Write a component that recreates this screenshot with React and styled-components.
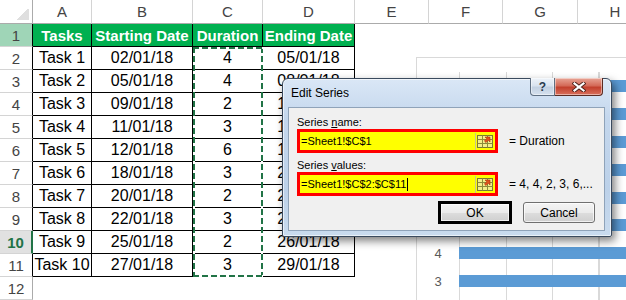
import React from 'react';
import styled, { createGlobalStyle } from 'styled-components';

const GlobalStyle = createGlobalStyle`
  html, body { margin: 0; padding: 0; background: #fff; overflow: hidden; }
  * { box-sizing: border-box; }
`;

const Page = styled.div`
  position: relative;
  width: 626px;
  height: 300px;
  overflow: hidden;
  font-family: "Liberation Sans", Arial, sans-serif;
`;

const Sheet = styled.div`
  display: grid;
  grid-template-columns: 33px 59px 101px 70px 92px 74px 74px 75px 75px;
  grid-template-rows: 24px repeat(12, 23px);
`;

const ColHead = styled.div`
  grid-row: 1;
  grid-column: ${p => p.$c};
  display: flex;
  align-items: center;
  justify-content: center;
  border-right: 1px solid #d4d4d4;
  border-bottom: 1px solid #ababab;
  color: #444;
  font-size: 15px;
`;

const Corner = styled(ColHead)`
  border-right-color: #ababab;
  background: linear-gradient(135deg, transparent 50%, #dfdfdf 50%) right 3px bottom 3px / 15px 11px no-repeat;
`;

const RowHead = styled.div`
  grid-row: ${p => p.$r};
  grid-column: 1;
  display: flex;
  align-items: center;
  justify-content: center;
  font-size: 15px;
  color: ${p => (p.$active ? '#217346' : '#444')};
  font-weight: ${p => (p.$active ? 700 : 400)};
  background: ${p => (p.$active ? '#e1e1e1' : p.$hl ? '#9fd5b7' : '#fff')};
  border-bottom: 1px solid #d4d4d4;
  border-right: ${p => (p.$active ? '2px solid #217346' : p.$table ? '1px solid #000' : '1px solid #ababab')};
`;

const Cell = styled.div`
  grid-row: ${p => p.$r};
  grid-column: ${p => p.$c};
  display: flex;
  align-items: center;
  justify-content: center;
  white-space: nowrap;
  border-right: 1px solid #000;
  border-bottom: 1px solid #000;
  background: ${p => (p.$head ? '#00b050' : '#fff')};
  color: ${p => (p.$head ? '#fff' : '#000')};
  font-weight: ${p => (p.$head ? 700 : 400)};
  font-size: ${p => (p.$head ? '15px' : '16px')};
`;

const dash = (deg) => `repeating-linear-gradient(${deg}, #217346 0 6px, #fff 6px 9px)`;

const Marquee = styled.div`
  grid-row: 3 / 13;
  grid-column: 4;
  z-index: 1;
  pointer-events: none;
  background:
    ${dash('90deg')} top left / 100% 2px no-repeat,
    ${dash('90deg')} bottom left / 100% 2px no-repeat,
    ${dash('180deg')} top left / 2px 100% no-repeat,
    ${dash('180deg')} top right / 2px 100% no-repeat;
`;

const Chart = styled.div`
  position: absolute;
  left: 416px;
  top: 57px;
  width: 260px;
  height: 280px;
  background: #fff;
  border: 1px solid #d9d9d9;
  padding-top: 14px;
  display: grid;
  grid-template-columns: 42px 1fr;
  grid-template-rows: 1fr;
`;

const Labels = styled.div`
  display: flex;
  flex-direction: column;
`;

const Label = styled.div`
  height: 27.9px;
  display: flex;
  align-items: center;
  justify-content: center;
  color: #595959;
  font-size: 13px;
`;

const PlotArea = styled.div`
  display: flex;
  flex-direction: column;
  background: repeating-linear-gradient(90deg, #d9d9d9 0 1px, transparent 1px 46.5px);
`;

const BarRow = styled.div`
  height: 27.9px;
  display: flex;
  align-items: center;
`;

const Bar = styled.div`
  height: 12px;
  width: 100%;
  background: #5b9bd5;
`;

const Dialog = styled.div`
  position: absolute;
  left: 282px;
  top: 78px;
  width: 330px;
  height: 159px;
  display: flex;
  flex-direction: column;
  padding: 0 6px 5px 5px;
  border: 1px solid #3a4a5e;
  border-radius: 6px 6px 2px 2px;
  background: linear-gradient(#dae7f6, #c4d7ed 25%, #bcd1e9 70%, #c9dbee);
  box-shadow: 3px 4px 9px rgba(0, 0, 0, 0.5), inset 0 0 0 1px rgba(255, 255, 255, 0.6);
  font-family: "Liberation Sans", Arial, sans-serif;
  color: #000;
`;

const TitleBar = styled.div`
  height: 28px;
  display: flex;
  justify-content: space-between;
  align-items: flex-start;
`;

const Title = styled.div`
  line-height: 29px;
  padding-left: 3px;
  font-size: 12px;
`;

const CaptionButtons = styled.div`
  display: flex;
  margin-right: 2px;
  margin-top: -1px;
`;

const CaptionButton = styled.div`
  height: 18px;
  width: ${p => (p.$close ? '48px' : '25px')};
  display: flex;
  align-items: center;
  justify-content: center;
  border: 1px solid ${p => (p.$close ? '#5b2b22' : '#5f6f82')};
  border-top: none;
  border-left-width: ${p => (p.$close ? '0' : '1px')};
  border-radius: ${p => (p.$close ? '0 0 4px 0' : '0 0 0 4px')};
  background: ${p =>
    p.$close
      ? 'linear-gradient(#e8a596, #d46a58 45%, #c2402d 55%, #d9705c)'
      : 'linear-gradient(#eef3f9, #d9e3ef 45%, #c3d1e2 55%, #d6e1ee)'};
  box-shadow: inset 0 0 0 1px rgba(255, 255, 255, 0.45);
  color: #2a3a4e;
  font-weight: 700;
  font-size: 12px;
`;

const Panel = styled.div`
  flex: 1;
  background: #f0f0f0;
  border: 1px solid #8fa3b9;
  padding: 7px 8px 0 8px;
  display: flex;
  flex-direction: column;
`;

const FieldLabel = styled.div`
  font-size: 11px;
  line-height: 14px;
  margin-top: ${p => p.$gap || 0}px;
`;

const FieldRow = styled.div`
  display: flex;
  align-items: center;
`;

const InputBox = styled.div`
  width: 201px;
  height: ${p => p.$h}px;
  border: 3px solid #ff0000;
  background: #ffff00;
  display: flex;
  align-items: center;
  padding-left: 1px;
  padding-right: 1px;
  font-size: 11px;
`;

const InputText = styled.span`
  flex: 1;
  white-space: nowrap;
  display: flex;
  align-items: center;
`;

const Caret = styled.span`
  display: inline-block;
  width: 1px;
  height: 13px;
  margin-left: 1px;
  background: #000;
`;

const RangeButton = styled.div`
  width: 19px;
  height: 17px;
  display: flex;
  align-items: center;
  justify-content: center;
  border-left: 1px solid #c8c88a;
`;

const Value = styled.div`
  margin-left: 11px;
  font-size: 12px;
  white-space: nowrap;
`;

const ButtonRow = styled.div`
  display: flex;
  justify-content: flex-end;
  align-items: center;
  margin-top: 5px;
  padding-right: 1px;
  gap: 11px;
`;

const Button = styled.div`
  width: ${p => (p.$default ? '74px' : '72px')};
  height: ${p => (p.$default ? '23px' : '21px')};
  display: flex;
  align-items: center;
  justify-content: center;
  font-size: 12px;
  border: ${p => (p.$default ? '3px solid #000' : '1px solid #707070')};
  border-radius: ${p => (p.$default ? '0' : '3px')};
  background: linear-gradient(#f4f4f4, #ebebeb 50%, #dddddd 51%, #cfcfcf);
  box-shadow: inset 0 0 0 1px rgba(255, 255, 255, 0.7);
`;

function RangeIcon() {
  return (
    <svg width="16" height="14" viewBox="0 0 16 14">
      <rect x="0.5" y="1.5" width="15" height="12" fill="#f3ee8a" stroke="#7a7a30" />
      <path d="M0.5 5.5H15.5M0.5 9.5H15.5M5.5 1.5V13.5M10.5 1.5V13.5" stroke="#8c8c3a" strokeWidth="1" />
      <path d="M8 3L13 3L13 8L11.3 6.3L9 8.6L7.4 7L9.7 4.7Z" fill="#e2531c" stroke="#a33410" strokeWidth="0.6" />
    </svg>
  );
}

function CloseGlyph() {
  return (
    <svg width="14" height="10" viewBox="0 0 14 10">
      <path d="M2.5 1.5L11.5 8.5M11.5 1.5L2.5 8.5" stroke="#4a2019" strokeWidth="4" strokeLinecap="square" />
      <path d="M2.5 1.5L11.5 8.5M11.5 1.5L2.5 8.5" stroke="#fff" strokeWidth="2.2" strokeLinecap="square" />
    </svg>
  );
}

const columns = ['A', 'B', 'C', 'D', 'E', 'F', 'G', 'H'];
const headers = ['Tasks', 'Starting Date', 'Duration', 'Ending Date'];
const tasks = [
  ['Task 1', '02/01/18', 4, '05/01/18'],
  ['Task 2', '05/01/18', 4, '08/01/18'],
  ['Task 3', '09/01/18', 2, '10/01/18'],
  ['Task 4', '11/01/18', 3, '13/01/18'],
  ['Task 5', '12/01/18', 6, '17/01/18'],
  ['Task 6', '18/01/18', 3, '20/01/18'],
  ['Task 7', '20/01/18', 2, '21/01/18'],
  ['Task 8', '22/01/18', 3, '24/01/18'],
  ['Task 9', '25/01/18', 2, '26/01/18'],
  ['Task 10', '27/01/18', 3, '29/01/18'],
];
const categories = ['2', '3', '2', '3', '6', '3', '4', '3'];

export default function App() {
  return (
    <Page>
      <GlobalStyle />
      <Sheet>
        <Corner $c={1} />
        {columns.map((c, i) => (
          <ColHead key={c} $c={i + 2}>{c}</ColHead>
        ))}
        {Array.from({ length: 12 }, (_, i) => (
          <RowHead key={i} $r={i + 2} $hl={i === 0} $active={i === 9} $table={i < 11}>
            {i + 1}
          </RowHead>
        ))}
        {headers.map((h, i) => (
          <Cell key={h} $r={2} $c={i + 2} $head>{h}</Cell>
        ))}
        {tasks.map((row, r) =>
          row.map((v, c) => (
            <Cell key={`${r}-${c}`} $r={r + 3} $c={c + 2}>{v}</Cell>
          ))
        )}
        <Marquee />
      </Sheet>

      <Chart>
        <Labels>
          {categories.map((c, i) => (
            <Label key={i}>{c}</Label>
          ))}
        </Labels>
        <PlotArea>
          {categories.map((c, i) => (
            <BarRow key={i}>
              <Bar />
            </BarRow>
          ))}
        </PlotArea>
      </Chart>

      <Dialog>
        <TitleBar>
          <Title>Edit Series</Title>
          <CaptionButtons>
            <CaptionButton>?</CaptionButton>
            <CaptionButton $close>
              <CloseGlyph />
            </CaptionButton>
          </CaptionButtons>
        </TitleBar>
        <Panel>
          <FieldLabel>Series <u>n</u>ame:</FieldLabel>
          <FieldRow>
            <InputBox $h={24}>
              <InputText>=Sheet1!$C$1</InputText>
              <RangeButton><RangeIcon /></RangeButton>
            </InputBox>
            <Value>= Duration</Value>
          </FieldRow>
          <FieldLabel $gap={5}>Series <u>v</u>alues:</FieldLabel>
          <FieldRow>
            <InputBox $h={24}>
              <InputText>=Sheet1!$C$2:$C$11<Caret /></InputText>
              <RangeButton><RangeIcon /></RangeButton>
            </InputBox>
            <Value>= 4, 4, 2, 3, 6,...</Value>
          </FieldRow>
          <ButtonRow>
            <Button $default>OK</Button>
            <Button>Cancel</Button>
          </ButtonRow>
        </Panel>
      </Dialog>
    </Page>
  );
}
